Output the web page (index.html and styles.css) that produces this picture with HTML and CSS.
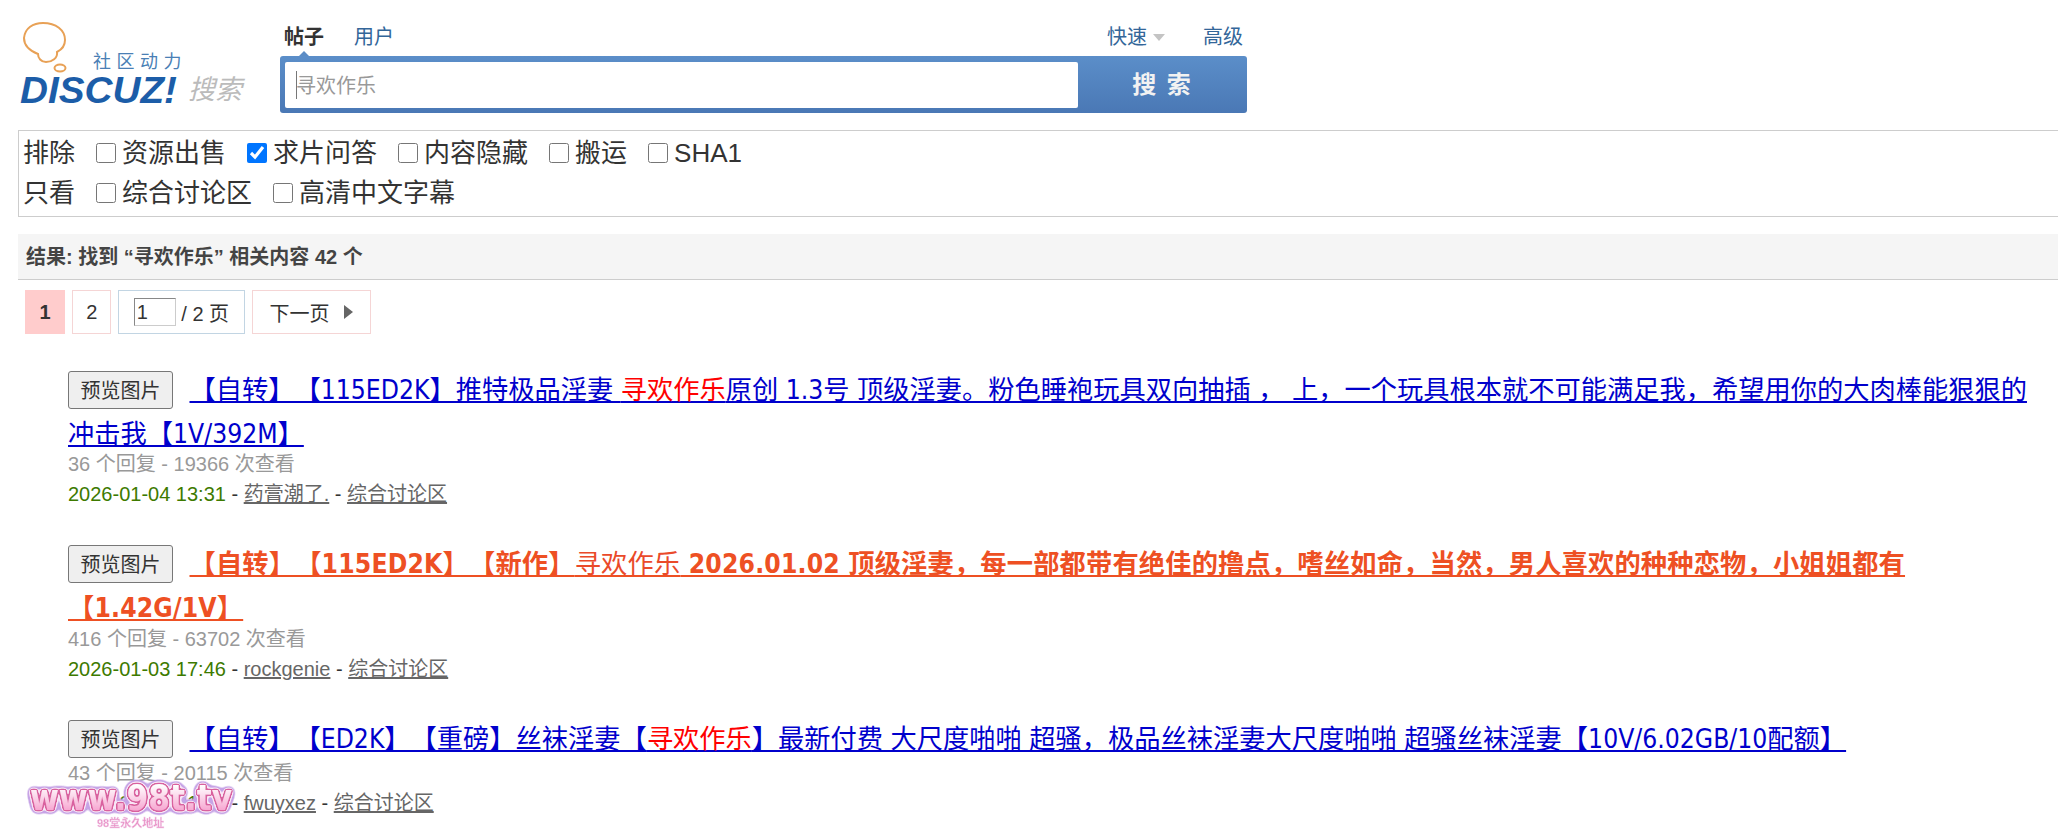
FILE: index.html
```html
<!DOCTYPE html>
<html lang="zh-CN">
<head>
    <meta charset="UTF-8">
    <title>寻欢作乐 - 搜索</title>
    <link rel="stylesheet" href="styles.css">
</head>
<body>
    <!-- Search header -->
    <header class="hd">
        <a class="logo" href="#">
            <svg class="logo-img" width="226" height="90" viewBox="0 0 226 90">
                <path d="M4 18 C5 8 13 3 23 3 C36 3 45 10 45 20 C45 26 41 30 37 32 C38 38 32 42 26 42 C21 42 18 38 18 34 C13 32 4 28 4 18 Z" fill="none" stroke="#e8a156" stroke-width="2"/>
                <ellipse cx="40" cy="48" rx="5.5" ry="3.5" fill="none" stroke="#e8a156" stroke-width="2"/>
                <text class="logo-slogan" x="73" y="48">社区动力</text>
                <text class="logo-name" x="0" y="83" textLength="157" lengthAdjust="spacingAndGlyphs">DISCUZ!</text>
                <text class="logo-sub" x="168" y="79">搜索</text>
            </svg>
        </a>
        <div class="search">
            <div class="search-tabs">
                <a class="tab tab-on" href="#">帖子</a>
                <a class="tab" href="#">用户</a>
                <span class="search-opts">
                    <a class="tab" href="#">快速<i class="caret"></i></a>
                    <a class="tab" href="#">高级</a>
                </span>
            </div>
            <form class="search-box">
                <input class="search-input" type="text" placeholder="寻欢作乐">
                <button class="search-btn" type="button">搜 索</button>
            </form>
        </div>
    </header>

    <!-- Filters -->
    <div class="filters">
        <div class="filter-row">
            <span class="filter-label">排除</span>
            <label class="filter-item"><input type="checkbox">资源出售</label>
            <label class="filter-item"><input type="checkbox" checked>求片问答</label>
            <label class="filter-item"><input type="checkbox">内容隐藏</label>
            <label class="filter-item"><input type="checkbox">搬运</label>
            <label class="filter-item"><input type="checkbox">SHA1</label>
        </div>
        <div class="filter-row">
            <span class="filter-label">只看</span>
            <label class="filter-item"><input type="checkbox">综合讨论区</label>
            <label class="filter-item"><input type="checkbox">高清中文字幕</label>
        </div>
    </div>

    <h2 class="result-bar">结果: 找到 “寻欢作乐” 相关内容 42 个</h2>

    <div class="pager">
        <strong class="pg pg-on">1</strong>
        <a class="pg pg-num" href="#">2</a>
        <label class="pg pg-jump"><input type="text" value="1"> / 2 页</label>
        <a class="pg pg-next" href="#">下一页<i class="arrow"></i></a>
    </div>

    <ul class="results">
        <li class="result">
            <h3 class="result-title"><button class="preview" type="button">预览图片</button> <a href="#">【自转】【115ED2K】推特极品淫妻 <em>寻欢作乐</em>原创 1.3号 顶级淫妻。粉色睡袍玩具双向抽插 ， 上，一个玩具根本就不可能满足我，希望用你的大肉棒能狠狠的冲击我【1V/392M】</a></h3>
            <p class="result-meta">36 个回复 - 19366 次查看</p>
            <p class="result-info"><span class="date">2026-01-04 13:31</span> - <a href="#">药膏潮了.</a> - <a href="#">综合讨论区</a></p>
        </li>
        <li class="result">
            <h3 class="result-title result-title-hot"><button class="preview" type="button">预览图片</button> <a class="hot" href="#">【自转】【115ED2K】【新作】<em>寻欢作乐</em> 2026.01.02 顶级淫妻，每一部都带有绝佳的撸点，嗜丝如命，当然，男人喜欢的种种恋物，小姐姐都有<span class="nowrap">【1.42G/1V】</span></a></h3>
            <p class="result-meta">416 个回复 - 63702 次查看</p>
            <p class="result-info"><span class="date">2026-01-03 17:46</span> - <a href="#">rockgenie</a> - <a href="#">综合讨论区</a></p>
        </li>
        <li class="result">
            <h3 class="result-title result-title-single"><button class="preview" type="button">预览图片</button> <a href="#">【自转】【ED2K】【重磅】丝袜淫妻【<em>寻欢作乐</em>】最新付费 大尺度啪啪 超骚，极品丝袜淫妻大尺度啪啪 超骚丝袜淫妻【10V/6.02GB/10配额】</a></h3>
            <p class="result-meta">43 个回复 - 20115 次查看</p>
            <p class="result-info"><span class="date">2026-01-02 21:08</span> - <a href="#">fwuyxez</a> - <a href="#">综合讨论区</a></p>
        </li>
    </ul>

    <!-- Site watermark burned over the corner -->
    <svg class="watermark" width="240" height="67" viewBox="0 0 240 67">
        <defs>
            <linearGradient id="wmFill" x1="0" y1="0" x2="0" y2="1">
                <stop offset="0.2" stop-color="#fff"/>
                <stop offset="0.8" stop-color="#f7a8d2"/>
            </linearGradient>
            <filter id="wmHalo" x="-5%" y="-30%" width="110%" height="160%">
                <feGaussianBlur in="SourceAlpha" stdDeviation="0.8"/>
                <feComponentTransfer result="inner"><feFuncA type="linear" slope="12" intercept="-0.6"/></feComponentTransfer>
                <feFlood flood-color="#d9609f"/>
                <feComposite in2="inner" operator="in" result="innerFill"/>
                <feGaussianBlur in="SourceAlpha" stdDeviation="2"/>
                <feComponentTransfer result="mid"><feFuncA type="linear" slope="14" intercept="-1"/></feComponentTransfer>
                <feFlood flood-color="#f9e6f6"/>
                <feComposite in2="mid" operator="in" result="midFill"/>
                <feGaussianBlur in="SourceAlpha" stdDeviation="3.5"/>
                <feComponentTransfer result="outer"><feFuncA type="linear" slope="16" intercept="-0.8"/></feComponentTransfer>
                <feFlood flood-color="#c6a4e6"/>
                <feComposite in2="outer" operator="in" result="outerFill"/>
                <feMerge>
                    <feMergeNode in="outerFill"/>
                    <feMergeNode in="midFill"/>
                    <feMergeNode in="innerFill"/>
                    <feMergeNode in="SourceGraphic"/>
                </feMerge>
            </filter>
        </defs>
        <text class="wm-url" x="15" y="40" textLength="202" lengthAdjust="spacingAndGlyphs" fill="url(#wmFill)" filter="url(#wmHalo)">www.98t.tv</text>
        <text class="wm-sub" x="82" y="57">98堂永久地址</text>
    </svg>
</body>
</html>
```

FILE: styles.css
```css
:root {
    --link-color: #0000cc;
    --tab-color: #336699;
    --line-color: #cdcdcd;
    --ui-font: 'Liberation Sans', 'Noto Sans CJK SC', sans-serif;
    --title-font: 'DejaVu Sans Condensed', 'Noto Sans CJK SC', sans-serif;
}

html, body {
    overflow-x: hidden;
}

body {
    margin: 0;
    font-family: var(--ui-font);
    font-size: 20px;
    color: #333;
    background-color: #fff;
    text-spacing-trim: space-all;
}

a {
    color: inherit;
}

/* header */
.hd {
    display: flex;
    height: 130px;
    padding-left: 20px;
}

.logo {
    width: 260px;
    flex: none;
    padding-top: 20px;
    text-decoration: none;
}

.logo-img {
    display: block;
    overflow: visible;
}

.logo-slogan {
    font-size: 18px;
    fill: #4a7fb5;
    letter-spacing: 5.5px;
}

.logo-name {
    font-size: 36px;
    font-weight: 700;
    font-style: italic;
    fill: #1c5da8;
}

.logo-sub {
    font-size: 27px;
    font-style: italic;
    fill: #bbb;
}

.search {
    width: 967px;
}

.search-tabs {
    position: relative;
    display: flex;
    align-items: center;
    gap: 30px;
    height: 56px;
    padding: 14px 4px 0;
    box-sizing: border-box;
}

.tab {
    color: var(--tab-color);
    text-decoration: none;
}

.tab-on {
    color: #333;
    font-weight: 700;
}

.tab-on::after {
    content: "";
    position: absolute;
    left: 19px;
    bottom: 0;
    border: 5px solid transparent;
    border-top: 0;
    border-bottom-color: #5b8cc5;
}

.search-opts {
    display: flex;
    gap: 38px;
    margin-left: auto;
}

.caret {
    display: inline-block;
    margin-left: 6px;
    border: 6px solid transparent;
    border-bottom: 0;
    border-top: 7px solid #c4c4c4;
    vertical-align: 3px;
}

.search-box {
    display: flex;
    height: 57px;
    box-sizing: border-box;
    background: linear-gradient(#5b8ec9, #4a78b5);
    border-radius: 3px;
    padding: 6px 0 5px 5px;
}

.search-input {
    flex: 1;
    min-width: 0;
    border: 0;
    border-radius: 2px;
    outline: 0;
    padding: 3px 0 0 11px;
    box-sizing: border-box;
    font: inherit;
    color: #333;
    background: #fff linear-gradient(#777, #777) no-repeat 11px center / 1px 28px;
}

.search-input::placeholder {
    color: #999;
}

.search-btn {
    width: 169px;
    border: 0;
    background: none;
    padding: 0 0 6px;
    font: 700 24px var(--ui-font);
    color: #f2f2f2;
    letter-spacing: 2px;
}

/* filters */
.filters {
    height: 87px;
    margin: 0 -20px 17px 18px;
    padding-top: 2px;
    box-sizing: border-box;
    border: 1px solid var(--line-color);
    font-size: 26px;
    line-height: 40px;
}

.filter-row {
    display: flex;
    padding-left: 4px;
    gap: 21px;
}

.filter-item {
    display: flex;
    align-items: center;
}

.filter-item input {
    width: 20px;
    height: 20px;
    margin: 0 6px 0 0;
}

/* result count */
.result-bar {
    height: 46px;
    margin: 0 -20px 10px 18px;
    padding-left: 8px;
    box-sizing: border-box;
    background-color: #f5f5f5;
    border-bottom: 1px solid var(--line-color);
    font-size: 20px;
    line-height: 46px;
    color: #444;
}

/* pager */
.pager {
    display: flex;
    gap: 7px;
    height: 44px;
    margin-left: 25px;
}

.pg {
    display: flex;
    align-items: center;
    box-sizing: border-box;
    padding: 0 13.5px;
    border: 1px solid #f5d5d5;
    color: #333;
    text-decoration: none;
}

.pg-on {
    background-color: #ffcccc;
    border-color: #ffcccc;
}

.pg-num {
    padding: 0 13px;
}

.pg-jump {
    border-color: #c2d5e3;
    padding: 0 14.5px;
    white-space: pre;
}

.pg-jump input {
    width: 42px;
    height: 28px;
    padding: 0 2px;
    box-sizing: border-box;
    border: 1px solid #ccc;
    border-top-color: #888;
    border-left-color: #888;
    font: inherit;
    color: #333;
}

.pg-next {
    padding: 0 17px;
}

.arrow {
    margin-left: 14px;
    border: 7px solid transparent;
    border-right: 0;
    border-left: 9px solid #666;
}

/* results */
.results {
    list-style: none;
    margin: 34px 0 0;
    padding: 0 8px 0 68px;
}

.result {
    margin-bottom: 33px;
}

.result-title {
    margin: 0 0 -7px;
    font-family: var(--title-font);
    font-size: 26.25px;
    font-weight: 400;
    line-height: 44px;
    color: var(--link-color);
}

.result-title-hot {
    margin-bottom: -6px;
}

.result-title-single {
    margin-bottom: -3px;
}

.result-title a {
    color: var(--link-color);
    text-decoration-thickness: 2px;
    text-underline-offset: 2px;
}

.result-title em {
    font-style: normal;
    color: #f00;
}

.result-title .hot {
    color: #ee5023;
    font-weight: 700;
    letter-spacing: 0.17px;
}

.result-title .hot em {
    color: #ea4a2a;
    font-weight: 400;
}

.nowrap {
    white-space: nowrap;
}

.preview {
    width: 105px;
    height: 38px;
    margin-right: 9px;
    padding: 0;
    border: 1px solid #777;
    border-radius: 3px;
    background-color: #efefef;
    font: 20px var(--ui-font);
    color: #333;
    vertical-align: 1px;
}

.result-meta,
.result-info {
    margin: 0;
    line-height: 30px;
}

.result-meta {
    color: #999;
}

.date {
    color: #3d7a00;
}

.result-info a {
    color: #666;
}

/* watermark */
.watermark {
    position: fixed;
    left: 15px;
    bottom: 0;
}

.wm-url {
    font-family: 'DejaVu Sans', sans-serif;
    font-size: 36px;
    font-weight: 700;
}

.wm-sub {
    font-size: 11px;
    font-weight: 700;
    fill: #e98fc4;
    stroke: #f3d5ee;
    stroke-width: 0.4px;
}
```
